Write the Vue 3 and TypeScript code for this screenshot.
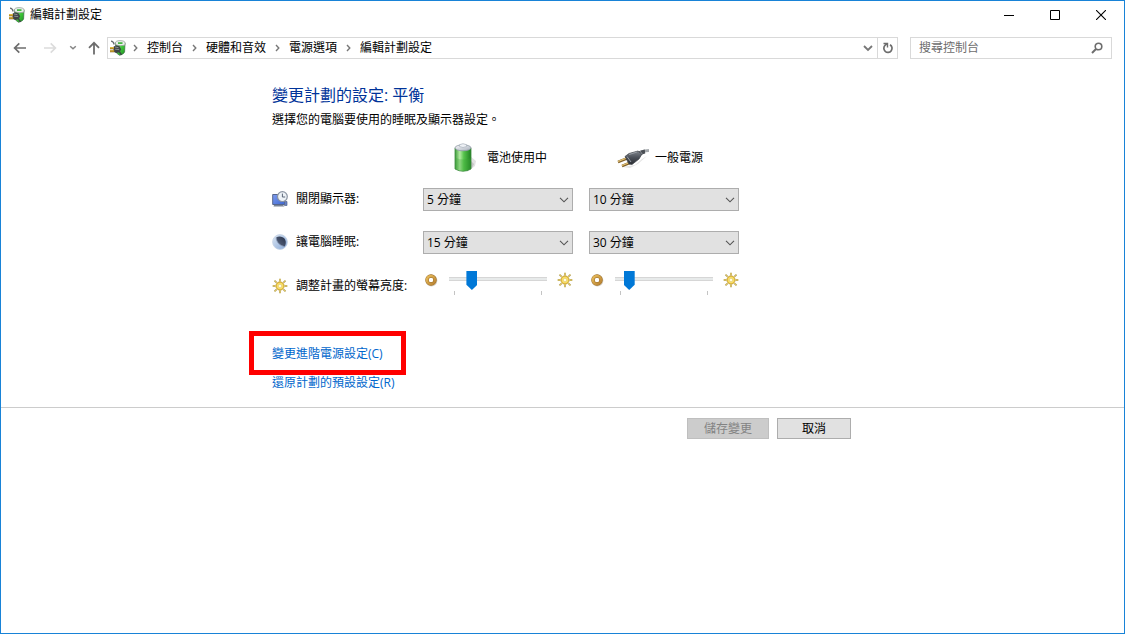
<script setup lang="ts">
import { ref } from 'vue'

interface PlanRow {
  id: string
  label: string
  icon: string
  battery: string
  plugged: string
}

const crumbs: string[] = ['控制台', '硬體和音效', '電源選項', '編輯計劃設定']
const durations: string[] = ['1 分鐘', '5 分鐘', '10 分鐘', '15 分鐘', '30 分鐘', '永不']

const rows = ref<PlanRow[]>([
  { id: 'display', label: '關閉顯示器:', icon: '#i-display', battery: '5 分鐘', plugged: '10 分鐘' },
  { id: 'sleep', label: '讓電腦睡眠:', icon: '#i-moon', battery: '15 分鐘', plugged: '30 分鐘' },
])

const brightness = ref([
  { id: 'bright-battery', name: '電池使用中', value: 20 },
  { id: 'bright-plugged', name: '一般電源', value: 10 },
])
const search = ref('')
</script>

<template>
  <div class="window">
    <svg class="defs" width="0" height="0" aria-hidden="true">
      <defs>
        <linearGradient id="g-green" x1="0" x2="1" y1="0" y2="0">
          <stop offset="0" stop-color="#3d9c3a" />
          <stop offset=".3" stop-color="#b4eba2" />
          <stop offset=".55" stop-color="#56c44c" />
          <stop offset="1" stop-color="#1f8021" />
        </linearGradient>
        <linearGradient id="g-app" x1="0" x2="1" y1="0" y2="1">
          <stop offset="0" stop-color="#9be58e" />
          <stop offset=".5" stop-color="#3fc83a" />
          <stop offset="1" stop-color="#1d8f23" />
        </linearGradient>
        <linearGradient id="g-cap" x1="0" x2="1" y1="0" y2="1">
          <stop offset="0" stop-color="#f8f9fb" />
          <stop offset="1" stop-color="#a9b1bd" />
        </linearGradient>
        <linearGradient id="g-gold" x1="0" x2="1" y1="0" y2="1">
          <stop offset="0" stop-color="#e8bc5a" />
          <stop offset="1" stop-color="#b88232" />
        </linearGradient>
        <radialGradient id="g-sun">
          <stop offset="0" stop-color="#fffbe0" />
          <stop offset=".4" stop-color="#fff3a0" />
          <stop offset=".75" stop-color="#f7d84e" />
          <stop offset="1" stop-color="#d3a830" />
        </radialGradient>
        <linearGradient id="g-blue" x1="0" x2="1" y1="0" y2="1">
          <stop offset="0" stop-color="#7f9df0" />
          <stop offset="1" stop-color="#3c66d0" />
        </linearGradient>
        <linearGradient id="g-moon" x1="0" x2="1" y1="0" y2="1">
          <stop offset="0" stop-color="#dce6f2" />
          <stop offset="1" stop-color="#86a8d8" />
        </linearGradient>
        <linearGradient id="g-dark" x1="0" x2="1" y1="1" y2="0">
          <stop offset="0" stop-color="#5d6b85" />
          <stop offset="1" stop-color="#28324a" />
        </linearGradient>
        <linearGradient id="g-plug" x1="0" x2="0" y1="0" y2="1">
          <stop offset="0" stop-color="#80858c" />
          <stop offset=".5" stop-color="#4a4f58" />
          <stop offset="1" stop-color="#2a2d33" />
        </linearGradient>
      </defs>
      <symbol id="i-app" viewBox="0 0 16 16">
        <path d="M1 1.2Q3.400 1.200 4.200 4.500" fill="none" stroke="#666c70" stroke-width="1.2" />
        <path d="M5.500 3 15 3 14.600 12Q13.500 14.600 9.500 15.300L6.500 13Z" fill="url(#g-app)" stroke="#3b6b42" stroke-width=".7" />
        <path d="M5.200 3Q5.500.7 10 .6 15 .7 15.200 3L14.800 5.200Q11 6.400 6 5Z" fill="#e9efea" stroke="#7c8a80" stroke-width=".6" />
        <path d="M8 2.200h4.500v1.800H8Z" fill="#48b845" />
        <path d="M3.500 6.800 6 5.200 9.500 6.300 11.200 9.200 9.600 12.200 6 13 3.500 11.800Z" fill="#3e4446" />
        <path d="m5 7 3.500.7M5.200 9.200l4 .4" stroke="#9aa2a2" stroke-width=".8" />
        <path d="M9.500 12 11.500 14.800" stroke="#3e4446" stroke-width="1.4" />
        <path d="M0 8.200h4M0 11.300h4.200" stroke="#76520b" stroke-width="2" />
        <path d="M0 7.900h4M0 11h4.200" stroke="#f3ca43" stroke-width="1.2" />
      </symbol>
      <symbol id="i-ring" viewBox="0 0 14 14">
        <circle cx="7.4" cy="7.6" r="4.500" fill="none" stroke="#d8d3c8" stroke-width="3" />
        <circle cx="7" cy="7" r="4" fill="none" stroke="#9c6c24" stroke-width="3.4" />
        <circle cx="7" cy="7" r="4" fill="none" stroke="url(#g-gold)" stroke-width="2.600" />
      </symbol>
      <symbol id="i-sun" viewBox="0 0 18 18">
        <path d="M9 .8v3M9 14.200v3M.8 9h3M14.200 9h3M2.800 3l2.400 2.300M12.800 12.800l2.400 2.300M15.200 3l-2.400 2.300M5.200 12.800l-2.400 2.300" stroke="#b5a566" stroke-width="2" />
        <path d="M9 1v2.600M9 14.200v2.600M1 9h2.800M14.200 9H17M3 3.200l2 2M13 13l2 2M15 3.200l-2 2M5 13l-2 2" stroke="#edcf58" stroke-width="1" />
        <circle cx="9" cy="9" r="4.700" fill="url(#g-sun)" stroke="#c09a3a" stroke-width=".7" />
        <circle cx="9" cy="9" r="2.100" fill="#fffce2" stroke="#dcb848" stroke-width=".7" />
      </symbol>
      <symbol id="i-display" viewBox="0 0 16 16">
        <path d="M.7 3.500H12.500v10H.7Z" fill="url(#g-blue)" stroke="#55658c" stroke-width="1" />
        <path d="M2 14h9l1.500 1.500H1.500Z" fill="#7a8494" />
        <path d="M12.500 10.500h2.500v4h-2.500Z" fill="#6580c4" stroke="#56668c" stroke-width=".7" />
        <circle cx="10.400" cy="5.600" r="4.900" fill="#edf2f7" stroke="#8b94a2" stroke-width="1.200" />
        <path d="M10.400 2.600v3.400h2.800" fill="none" stroke="#5c6778" stroke-width="1" />
      </symbol>
      <symbol id="i-moon" viewBox="0 0 16 16">
        <circle cx="8" cy="8" r="7.400" fill="url(#g-moon)" stroke="#c4d2e4" stroke-width=".8" />
        <path d="M4.200 3.500C6.600 1.800 11 2.200 13 5.300c1.400 2.800.8 5.500-.4 7.200C8.500 11.800 4.500 8.700 4.200 3.500Z" fill="url(#g-dark)" />
        <path d="M4.200 3.500C4.200 8.400 8.400 12 12.600 12.500" fill="none" stroke="#8393b0" stroke-width=".8" />
      </symbol>
    </svg>

    <header class="titlebar">
      <svg class="app-icon" width="16" height="16" aria-hidden="true"><use href="#i-app" /></svg>
      <span class="title">編輯計劃設定</span>
      <div class="controls">
        <button type="button" aria-label="最小化">
          <svg width="10" height="10"><path d="M0 5.500h10" stroke="#000" shape-rendering="crispEdges" /></svg>
        </button>
        <button type="button" aria-label="最大化">
          <svg width="10" height="10"><path d="M.5.5h9v9h-9Z" fill="none" stroke="#000" /></svg>
        </button>
        <button type="button" aria-label="關閉">
          <svg width="10" height="10"><path d="m0 0 10 10M10 0 0 10" stroke="#000" stroke-width="1.100" /></svg>
        </button>
      </div>
    </header>

    <nav class="navbar" aria-label="導覽">
      <button type="button" class="arrow" aria-label="上一頁">
        <svg width="14" height="14"><path d="M13 7H1.800M6.300 2.300 1.600 7l4.700 4.700" fill="none" stroke="#6d6d6d" stroke-width="1.700" /></svg>
      </button>
      <button type="button" class="arrow" aria-label="下一頁" disabled>
        <svg width="14" height="14"><path d="M1 7h11.200M7.700 2.300 12.400 7l-4.700 4.700" fill="none" stroke="#dcdcdc" stroke-width="1.700" /></svg>
      </button>
      <button type="button" class="recent" aria-label="最近的位置">
        <svg width="8" height="6"><path d="m1.200 1.200 2.800 2.600 2.800-2.600" fill="none" stroke="#858585" stroke-width="1.500" /></svg>
      </button>
      <button type="button" class="up" aria-label="上一層">
        <svg width="14" height="14"><path d="M7 13.500V2M2 6.800l5-5 5 5" fill="none" stroke="#6d6d6d" stroke-width="1.800" /></svg>
      </button>
      <div class="address">
        <svg class="address-icon" width="16" height="16" aria-hidden="true"><use href="#i-app" /></svg>
        <template v-for="crumb in crumbs" :key="crumb">
          <svg class="sep" width="5" height="8" aria-hidden="true"><path d="m1 1 2.800 3L1 7" fill="none" stroke="#777" stroke-width="1.400" /></svg>
          <a href="#">{{ crumb }}</a>
        </template>
        <button type="button" class="history" aria-label="先前的位置">
          <svg width="10" height="7"><path d="m1 1 4 4 4-4" fill="none" stroke="#777" stroke-width="1.800" /></svg>
        </button>
        <button type="button" class="refresh" aria-label="重新整理">
          <svg width="12" height="12"><path d="M8 2.700A4.100 4.100 0 1 1 3.200 3.200L5 1.800" fill="none" stroke="#6d6d6d" stroke-width="1.700" /><path d="M1.500 1.500H5.500V5.500" fill="none" stroke="#6d6d6d" stroke-width="1.400" /></svg>
        </button>
      </div>
      <div class="search">
        <input v-model="search" type="text" placeholder="搜尋控制台" aria-label="搜尋控制台" />
        <svg width="12" height="12" aria-hidden="true"><circle cx="7.500" cy="4.500" r="3.300" fill="none" stroke="#6d6d6d" stroke-width="1.600" /><path d="M5 7 1 11" stroke="#6d6d6d" stroke-width="2" /></svg>
      </div>
    </nav>

    <main>
      <div class="content">
        <h1>變更計劃的設定: 平衡</h1>
        <p>選擇您的電腦要使用的睡眠及顯示器設定。</p>

        <div class="plan">
          <div class="head battery">
            <svg width="26" height="32" viewBox="0 0 26 32" aria-hidden="true">
              <path d="M17 14 23 19 22 24 14 30Z" fill="#e2e2e2" />
              <path d="M18 19 21 22 19 26 15 28Z" fill="#c4c4c4" />
              <path d="M2 6Q10 2 18 6V27Q10 31.500 2 27Z" fill="url(#g-green)" stroke="#3c8a40" stroke-width=".8" />
              <path d="M3 16Q10 19 17.500 16V27Q10 30.500 3 27Z" fill="#39a735" opacity=".3" />
              <ellipse cx="10" cy="5.800" rx="8" ry="3" fill="url(#g-cap)" stroke="#8f99a5" stroke-width=".8" />
              <path d="M6.500 4.500V2.700Q10 .7 13.500 2.700V4.500Q10 6.500 6.500 4.500Z" fill="#eef1f5" stroke="#a9b1bb" stroke-width=".7" />
            </svg>
            <span>電池使用中</span>
          </div>
          <div class="head mains">
            <svg width="32" height="20" viewBox="0 0 32 20" aria-hidden="true">
              <path d="M5 19 18 17 25 11 30 8 21 16 13 20Z" fill="#e6e6e6" />
              <path d="M21 6Q24 3 32 2.500" fill="none" stroke="#a4a8ac" stroke-width="3" />
              <path d="M20 7Q24 4 28 3.500" fill="none" stroke="#4a4e54" stroke-width="4" />
              <path d="m1 14 10-4M5 18l10-4" stroke="#80602a" stroke-width="2.600" />
              <path d="m1 13.500 10-4M5 17.500l10-4" stroke="#e9c776" stroke-width="1.300" />
              <path d="M8 8.500 12 5.500 21 3 25 6 22 11 15 16.500 12 16Z" fill="url(#g-plug)" stroke="#3c4046" stroke-width=".7" />
              <path d="m10 8.500 4 5.500M12 6.500l8-2.500" fill="none" stroke="#989ea5" />
              <path d="m23 3 2.500 3.500" stroke="#8a8f95" />
            </svg>
            <span>一般電源</span>
          </div>

          <template v-for="row in rows" :key="row.id">
            <label class="name" :for="row.id + '-battery'">
              <svg width="16" height="16" aria-hidden="true"><use :href="row.icon" /></svg>
              {{ row.label }}
            </label>
            <div class="pick">
              <select :id="row.id + '-battery'" v-model="row.battery">
                <option v-for="d in durations" :key="d">{{ d }}</option>
              </select>
              <svg width="10" height="6" aria-hidden="true"><path d="m1 .8 4 4 4-4" fill="none" stroke="#555" stroke-width="1.100" /></svg>
            </div>
            <div class="pick">
              <select v-model="row.plugged" :aria-label="row.label + ' 一般電源'">
                <option v-for="d in durations" :key="d">{{ d }}</option>
              </select>
              <svg width="10" height="6" aria-hidden="true"><path d="m1 .8 4 4 4-4" fill="none" stroke="#555" stroke-width="1.100" /></svg>
            </div>
          </template>

          <label class="name bright" for="bright-battery">
            <svg width="16" height="16" aria-hidden="true"><use href="#i-sun" /></svg>
            調整計畫的螢幕亮度:
          </label>
          <div v-for="b in brightness" :key="b.id" class="slider">
            <svg width="14" height="14" aria-hidden="true"><use href="#i-ring" /></svg>
            <div class="scale">
              <input :id="b.id" v-model.number="b.value" type="range" min="0" max="100" :aria-label="'螢幕亮度 ' + b.name" />
              <div class="ticks"></div>
            </div>
            <svg width="16" height="16" aria-hidden="true"><use href="#i-sun" /></svg>
          </div>
        </div>

        <div class="links">
          <a class="marked" href="#">變更進階電源設定(C)</a>
          <a href="#">還原計劃的預設設定(R)</a>
        </div>
      </div>
    </main>

    <footer>
      <div class="content actions">
        <button type="button" class="save" disabled>儲存變更</button>
        <button type="button" class="cancel">取消</button>
      </div>
    </footer>
  </div>
</template>

<style>
body {
  margin: 0;
  background: #fff;
}
</style>

<style scoped>
* {
  box-sizing: border-box;
}
.window {
  min-height: 100vh;
  border: 1px solid #1883d7;
  background: #fff;
  color: #000;
  font: 12px/20px "Open Sans", "Noto Sans CJK TC", sans-serif;
}
.defs {
  position: absolute;
}
svg {
  display: block;
  flex: none;
}
button,
select,
input {
  font: inherit;
  color: inherit;
  margin: 0;
  border-radius: 0;
}
a {
  text-decoration: none;
}
.titlebar {
  display: flex;
  align-items: center;
  height: 28px;
  padding-left: 8px;
}
.title {
  margin-left: 5px;
}
.controls {
  display: flex;
  margin-left: auto;
}
.controls button,
.navbar button {
  display: flex;
  align-items: center;
  justify-content: center;
  padding: 0;
  border: 0;
  background: none;
}
.controls button {
  width: 46px;
  height: 28px;
}
.navbar {
  display: flex;
  align-items: center;
  height: 22px;
  margin: 8px 12px 0;
}
.navbar .arrow {
  width: 14px;
  margin-right: 16px;
}
.navbar .recent {
  width: 8px;
  margin-right: 10px;
  margin-left: -4px;
}
.navbar .up {
  width: 14px;
  margin-right: 6px;
}
.address {
  display: flex;
  flex: 1;
  align-items: center;
  height: 22px;
  border: 1px solid #d9d9d9;
}
.address-icon {
  margin: 0 -2px 0 2px;
}
.address a {
  color: #000;
  line-height: 18px;
  white-space: nowrap;
}
.sep {
  margin: 0 9px;
}
.navbar .history {
  width: 19px;
  height: 20px;
  margin-left: auto;
}
.navbar .refresh {
  width: 20px;
  height: 20px;
  border-left: 1px solid #d9d9d9;
}
.search {
  display: flex;
  flex: none;
  align-items: center;
  width: 202px;
  height: 22px;
  margin-left: 12px;
  padding: 0 8px;
  border: 1px solid #d9d9d9;
}
.search input {
  flex: 1;
  min-width: 0;
  height: 20px;
  padding: 0;
  border: 0;
  outline: 0;
  background: none;
}
.search input::placeholder {
  color: #6d6d6d;
}
main {
  padding: 25px 0 14px;
}
.content {
  max-width: 581px;
  margin: 0 auto;
}
h1 {
  margin: 0 0 4px;
  color: #003399;
  font-size: 16px;
  font-weight: 400;
  line-height: 22px;
}
p {
  margin: 0;
}
.plan {
  display: grid;
  grid-template-columns: 135px 150px 150px;
  grid-template-rows: 46px 43px 40px auto;
  column-gap: 16px;
  align-items: start;
  margin-top: 12px;
}
.head {
  display: flex;
  align-items: center;
  height: 31px;
}
.battery {
  grid-column: 2;
  gap: 8px;
  padding-left: 30px;
}
.mains {
  gap: 6px;
  padding-left: 28px;
}
.name {
  display: flex;
  align-items: center;
  gap: 8px;
  height: 22px;
  white-space: nowrap;
}
.bright {
  margin-top: 4px;
}
.pick {
  position: relative;
}
.pick select {
  display: block;
  width: 100%;
  height: 23px;
  padding: 0 20px 0 3px;
  appearance: none;
  border: 1px solid #adadad;
  background: #e1e1e1;
}
.pick svg {
  position: absolute;
  top: 9px;
  right: 4px;
  pointer-events: none;
}
.slider {
  display: flex;
  align-items: center;
  padding-left: 1px;
}
.slider > svg {
  margin-bottom: 6px;
}
.scale {
  flex: 1;
  margin: 0 10px 0 11px;
}
.scale input {
  display: block;
  width: 100%;
  height: 20px;
  appearance: none;
  background: none;
}
.scale input::-webkit-slider-runnable-track {
  height: 20px;
  background: linear-gradient(transparent 6px, #d6d6d6 6px 7px, #e7eaea 7px 9px, #d6d6d6 9px 10px, transparent 10px);
}
.scale input::-webkit-slider-thumb {
  width: 11px;
  height: 19px;
  appearance: none;
  border: 0;
  border-radius: 0;
  background: #0078d7;
  clip-path: polygon(0 0, 100% 0, 100% 72%, 50% 100%, 0 72%);
}
.ticks {
  height: 4px;
  margin: 0 5px;
  border: solid #c4c4c4;
  border-width: 0 1px;
}
.links {
  display: flex;
  flex-direction: column;
  align-items: flex-start;
  gap: 9px;
  margin-top: 47px;
}
.links a {
  color: #0066cc;
}
.marked {
  position: relative;
}
.marked::after {
  position: absolute;
  inset: -13px -23px -11px;
  border: 5px solid #ff0000;
  content: "";
  pointer-events: none;
}
footer {
  padding-top: 10px;
  border-top: 1px solid #cccccc;
}
.actions {
  display: flex;
  justify-content: flex-end;
  gap: 8px;
  padding-right: 2px;
}
.actions button {
  height: 21px;
  padding: 0;
  border: 1px solid #adadad;
  background: #e1e1e1;
  line-height: 19px;
}
.actions .save {
  width: 82px;
  border-color: #bfbfbf;
  background: #cccccc;
  color: #838383;
}
.actions .cancel {
  width: 74px;
}
</style>
